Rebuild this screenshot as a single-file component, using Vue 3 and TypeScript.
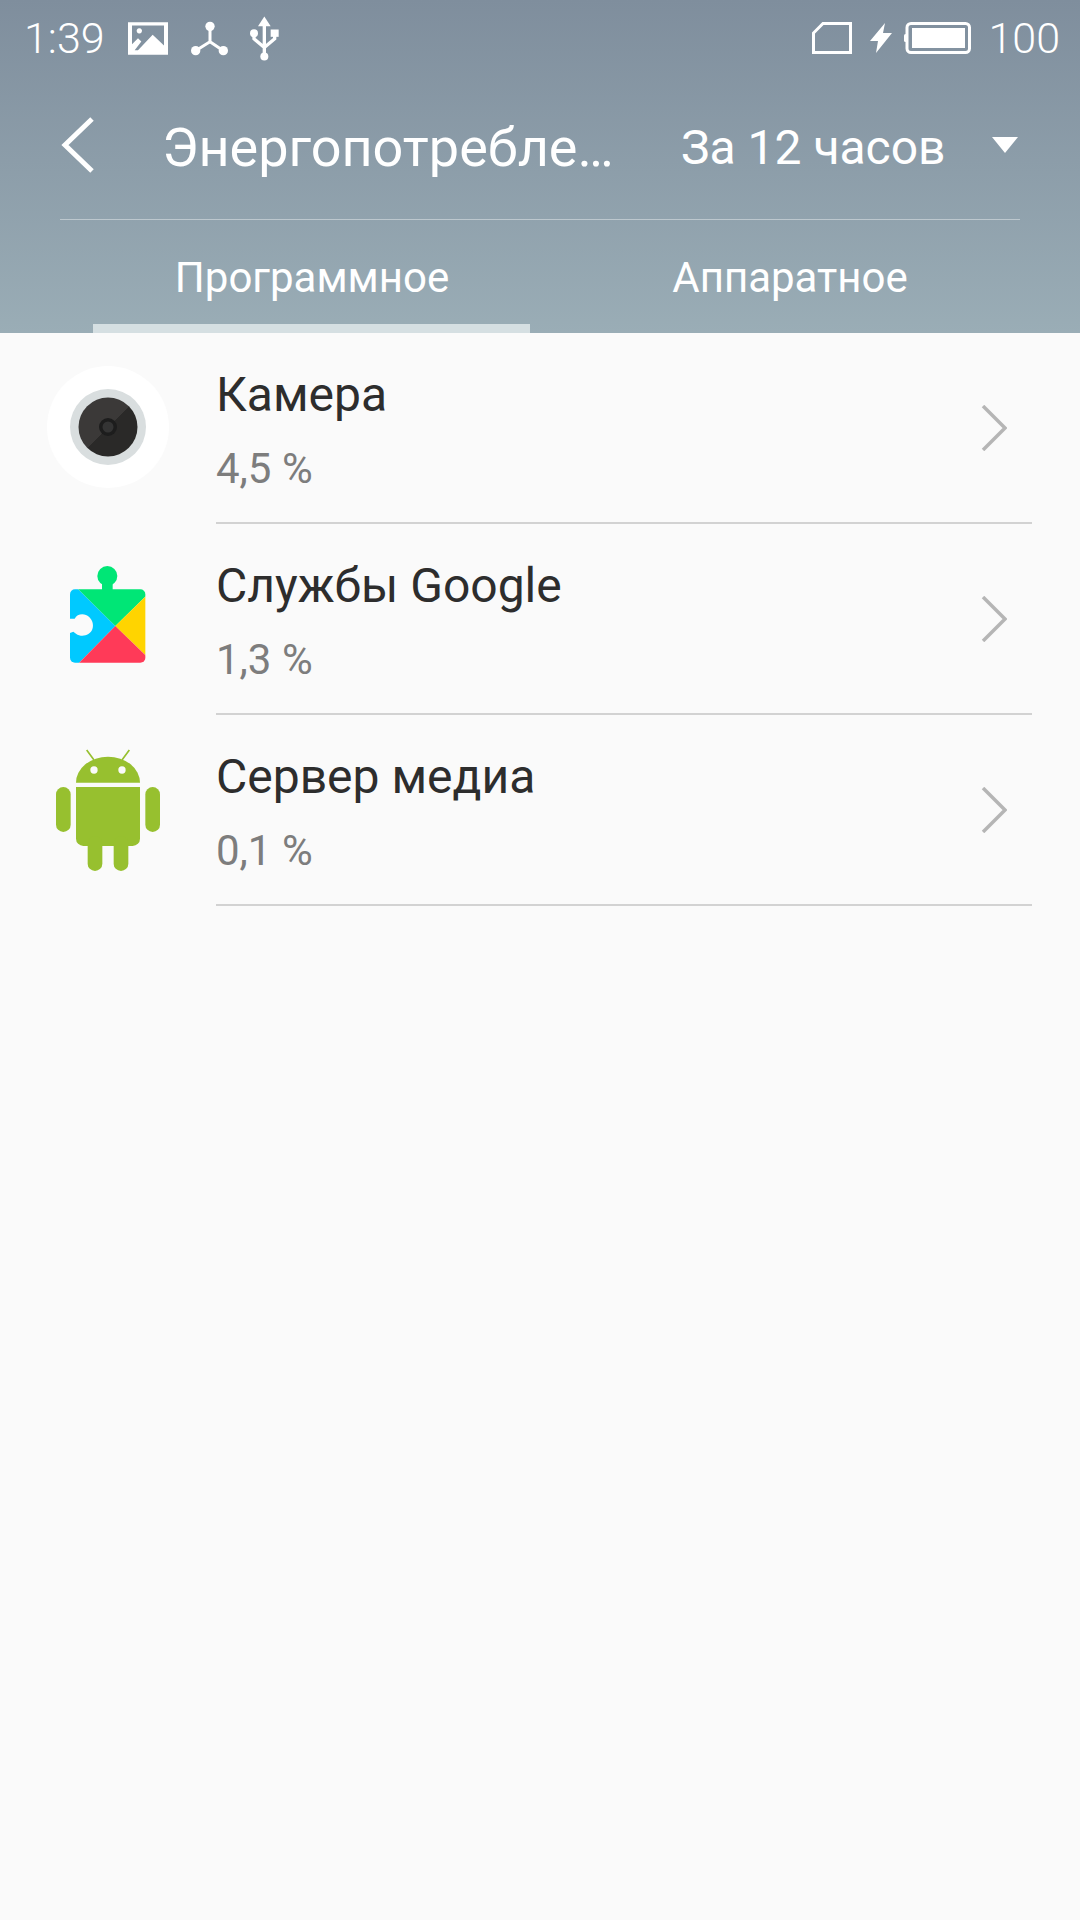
<template>
  <div class="screen">
    <header class="header">
      <div class="status-bar">
        <div class="status-group">
          <span class="clock">1:39</span>
          <svg class="ic-image" viewBox="18 20 120 98">
            <path fill="#fff" fill-rule="evenodd" d="M18 20H138V118H18ZM30 30V86L48 68L58 78L38 104H48L92 58L126 90V30ZM52 38A8 8 0 1 1 51.9 38Z" />
          </svg>
          <svg class="ic-nodes" viewBox="560 60 120 105">
            <g fill="#fff">
              <circle cx="620" cy="76" r="14" />
              <circle cx="577" cy="149" r="14" />
              <circle cx="660" cy="149" r="14" />
            </g>
            <path d="M620 76V122L577 149M620 122L660 149" fill="none" stroke="#fff" stroke-width="9" />
          </svg>
          <svg class="ic-usb" viewBox="740 44 90 134">
            <g fill="#fff">
              <path d="M783 45L802 74H764Z" />
              <circle cx="783" cy="165" r="12" />
              <circle cx="752" cy="95" r="12" />
              <rect x="802" y="84" width="24" height="22" />
            </g>
            <path d="M783 65V160M752 100V112L783 138M814 100V112L783 138" fill="none" stroke="#fff" stroke-width="10" />
          </svg>
        </div>
        <div class="status-group">
          <svg class="ic-sim" viewBox="0 0 40 32">
            <path d="M1.5 30.5V11L11 1.5H38.5V30.5Z" fill="none" stroke="#fff" stroke-width="3" />
          </svg>
          <svg class="ic-bolt" viewBox="0 0 22 30">
            <path fill="#fff" d="M15 0L0 18H8L6 30L22 10H13Z" />
          </svg>
          <svg class="ic-battery" viewBox="0 0 67 32">
            <rect x="3" y="1.5" width="62.5" height="29" rx="4" fill="none" stroke="#fff" stroke-width="3" />
            <rect x="8" y="6" width="53" height="20" fill="#fff" />
            <rect x="0" y="12" width="3" height="8" rx="1.5" fill="#fff" />
          </svg>
          <span class="level">100</span>
        </div>
      </div>

      <div class="toolbar">
        <svg class="back" viewBox="0 0 36 58">
          <path d="M32 3L5 29L32 55" fill="none" stroke="#fff" stroke-width="5" />
        </svg>
        <span class="title">Энергопотребление</span>
        <span class="period">За 12 часов</span>
        <span class="caret"></span>
      </div>

      <nav class="tabs">
        <div
          v-for="tab in tabs"
          :key="tab.label"
          class="tab"
          :class="{ active: tab.active }"
        >
          {{ tab.label }}
        </div>
      </nav>
    </header>

    <main class="list">
      <div v-for="item in items" :key="item.name" class="row">
        <div class="icon-cell">
          <svg v-if="item.icon === 'camera'" class="app-camera" width="122" height="122" viewBox="0 0 122 122">
            <defs>
              <linearGradient id="lens" x1="0" y1="0" x2="1" y2="1">
                <stop offset="0.5" stop-color="#3b3938" />
                <stop offset="0.5" stop-color="#2a2928" />
              </linearGradient>
            </defs>
            <circle cx="61" cy="61" r="61" fill="#fff" />
            <circle cx="61" cy="61" r="38" fill="#d9dedf" />
            <circle cx="61" cy="61" r="29.5" fill="url(#lens)" />
            <circle cx="61" cy="61" r="9" fill="#1d1d1d" />
            <circle cx="61" cy="61" r="5.5" fill="#343434" />
          </svg>

          <svg v-else-if="item.icon === 'play'" class="app-raised" width="130" height="130" viewBox="0 0 390 390">
            <defs>
              <clipPath id="piece">
                <rect x="90" y="118" width="226" height="220" rx="15" />
              </clipPath>
            </defs>
            <circle cx="202" cy="78" r="30" fill="#00e676" />
            <rect x="186" y="90" width="32" height="40" fill="#00e676" />
            <g clip-path="url(#piece)">
              <path fill="#00c9ff" d="M80 108H105L226 228L108 348H80Z" />
              <path fill="#00e676" d="M105 108H326V130L226 228Z" />
              <path fill="#ffd400" d="M326 130V325L226 228Z" />
              <path fill="#ff3a58" d="M226 228L326 325V348H108Z" />
            </g>
            <path fill="#fafafa" d="M88 206H104C110 194 125 190 138 195C155 202 163 222 157 238C150 256 125 264 108 251L100 245L88 250Z" />
          </svg>

          <svg v-else class="app-raised" width="130" height="140" viewBox="0 0 390 420">
            <g fill="#97c02f">
              <path d="M108 140A96 78 0 0 1 300 140Z" />
              <path d="M108 153H300V308A22 22 0 0 1 278 330H130A22 22 0 0 1 108 308Z" />
              <rect x="48" y="153" width="44" height="135" rx="22" />
              <rect x="316" y="153" width="44" height="135" rx="22" />
              <rect x="143" y="300" width="44" height="105" rx="22" />
              <rect x="221" y="300" width="44" height="105" rx="22" />
            </g>
            <path d="M140 42L162 72M268 42L246 72" stroke="#97c02f" stroke-width="5" />
            <circle cx="162" cy="102" r="11" fill="#fafafa" />
            <circle cx="246" cy="102" r="11" fill="#fafafa" />
          </svg>
        </div>
        <div class="row-body">
          <div class="row-text">
            <div class="name">{{ item.name }}</div>
            <div class="usage">{{ item.usage }}</div>
          </div>
          <svg class="chevron" viewBox="0 0 26 46">
            <path d="M2 1L24 23L2 45" fill="none" stroke="#b5b5b5" stroke-width="3.5" />
          </svg>
        </div>
      </div>
    </main>
  </div>
</template>

<script setup lang="ts">
interface Tab {
  label: string
  active: boolean
}

interface AppItem {
  name: string
  usage: string
  icon: 'camera' | 'play' | 'android'
}

const tabs: Tab[] = [
  { label: 'Программное', active: true },
  { label: 'Аппаратное', active: false },
]

const items: AppItem[] = [
  { name: 'Камера', usage: '4,5 %', icon: 'camera' },
  { name: 'Службы Google', usage: '1,3 %', icon: 'play' },
  { name: 'Сервер медиа', usage: '0,1 %', icon: 'android' },
]
</script>

<style>
html,
body {
  margin: 0;
  background: #fafafa;
}
</style>

<style scoped>
.screen {
  width: 1080px;
  height: 1920px;
  background: #fafafa;
  font-family: Roboto, "Noto Sans", sans-serif;
  overflow: hidden;
}

.header {
  height: 333px;
  box-sizing: border-box;
  background: linear-gradient(180deg, #7f8e9d 0%, #9aadb6 100%);
  color: #fff;
}

.status-bar {
  height: 76px;
  box-sizing: border-box;
  padding: 0 20px 0 24px;
  display: flex;
  justify-content: space-between;
  align-items: center;
}

.status-group {
  display: flex;
  align-items: center;
}

.clock,
.level {
  font-size: 43px;
  font-weight: 300;
  line-height: 44px;
}

.ic-image {
  width: 40px;
  height: 33px;
  margin-left: 23px;
}

.ic-nodes {
  width: 40px;
  height: 35px;
  margin-left: 22px;
}

.ic-usb {
  width: 30px;
  height: 45px;
  margin-left: 20px;
}

.ic-sim {
  width: 40px;
  height: 32px;
}

.ic-bolt {
  width: 22px;
  height: 30px;
  margin-left: 18px;
}

.ic-battery {
  width: 67px;
  height: 32px;
  margin-left: 12px;
}

.level {
  margin-left: 17px;
}

.toolbar {
  height: 144px;
  margin: 0 60px;
  box-sizing: border-box;
  border-bottom: 1px solid rgba(255, 255, 255, 0.4);
  display: flex;
  align-items: center;
  padding-bottom: 1px;
}

.back {
  width: 36px;
  height: 58px;
  flex-shrink: 0;
  margin-bottom: 5px;
}

.title {
  width: 452px;
  margin-left: 66px;
  font-size: 54px;
  white-space: nowrap;
  overflow: hidden;
  text-overflow: ellipsis;
  flex-shrink: 0;
}

.period {
  margin-left: 67px;
  font-size: 48px;
  white-space: nowrap;
}

.caret {
  margin-left: 46px;
  width: 0;
  height: 0;
  border-left: 13px solid transparent;
  border-right: 13px solid transparent;
  border-top: 16px solid #fff;
  margin-bottom: 5px;
}

.tabs {
  display: flex;
  padding: 0 51px 0 73px;
  height: 113px;
}

.tab {
  flex: 1;
  position: relative;
  text-align: center;
  font-size: 42px;
  line-height: 116px;
  color: #fff;
}

.tab.active::after {
  content: "";
  position: absolute;
  left: 20px;
  right: 21px;
  bottom: 0;
  height: 9px;
  background: #d5dfe2;
}

.row {
  height: 191px;
  display: flex;
}

.icon-cell {
  width: 216px;
  padding-left: 40px;
  box-sizing: border-box;
  flex-shrink: 0;
  display: flex;
  align-items: center;
}

.icon-cell svg {
  flex-shrink: 0;
}

.app-camera {
  margin: -4px 0 0 7px;
}

.app-raised {
  margin-top: -10px;
}

.row-body {
  flex: 1;
  margin-right: 48px;
  border-bottom: 2px solid #d2d2d2;
  display: flex;
  align-items: center;
  justify-content: space-between;
  padding-right: 25px;
}

.row-text {
  margin-top: 4px;
}

.name {
  font-size: 48px;
  line-height: 54px;
  color: #2d2d2d;
}

.usage {
  margin-top: 24px;
  font-size: 42px;
  line-height: 46px;
  color: #7d7d7d;
}

.chevron {
  width: 26px;
  height: 46px;
}
</style>
